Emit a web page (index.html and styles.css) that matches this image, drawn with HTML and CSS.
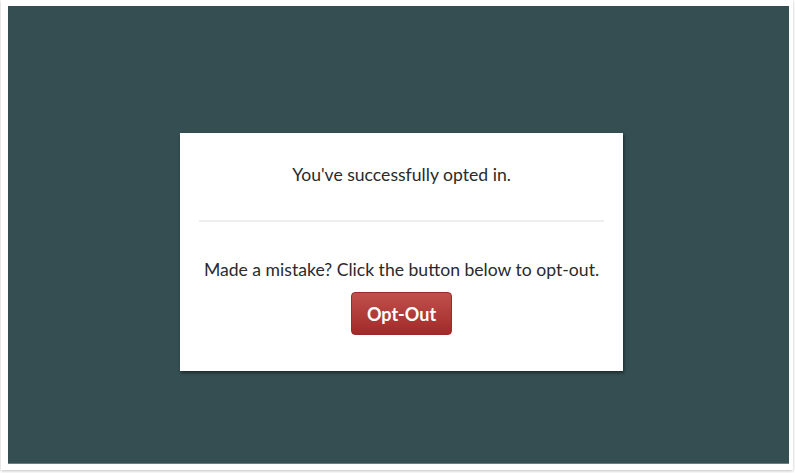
FILE: index.html
```html
<!DOCTYPE html>
<html lang="en">
<head>
    <meta charset="UTF-8">
    <title>Opt-In</title>
    <link rel="stylesheet" href="styles.css">
</head>
<body>
    <div class="frame">
        <div class="stage">
            <div class="card">
                <p class="status">You've successfully opted in.</p>
                <hr class="divider">
                <p class="hint">Made a mistake? Click the button below to opt-out.</p>
                <button class="btn-optout">Opt-Out</button>
            </div>
        </div>
    </div>
</body>
</html>
```

FILE: styles.css
```css
html, body {
    margin: 0;
    padding: 0;
}
body {
    width: 795px;
    height: 473px;
    background-color: #ffffff;
    font-family: Lato, "Open Sans", sans-serif;
    overflow: hidden;
}
.frame {
    width: 792px;
    height: 470px;
    box-sizing: border-box;
    margin-left: 1px;
    padding: 6px 4px 6px 7px;
    background-color: #ffffff;
    box-shadow: 0 1px 3px rgba(0,0,0,0.25);
}
.stage {
    height: 458px;
    box-sizing: border-box;
    background-color: #344e51;
    border-bottom: 1px solid #6b7f80;
    padding: 127px 165px 0 172px;
}
.card {
    width: 443px;
    height: 238px;
    box-sizing: border-box;
    background-color: #ffffff;
    padding: 30px 19px 0 19px;
    text-align: center;
    box-shadow: 1px 2px 3px rgba(0,0,0,0.45);
    color: #2a2a2a;
}
.status {
    margin: 0;
    font-size: 17.6px;
    line-height: 24px;
}
.divider {
    border: none;
    border-top: 2px solid #eeeeee;
    margin: 33px 0 0 0;
}
.hint {
    margin: 36px 0 0 0;
    font-size: 17.6px;
    line-height: 24px;
}
.btn-optout {
    margin-top: 10px;
    width: 101px;
    height: 43px;
    border: 1px solid #9b2a28;
    border-radius: 4px;
    background: linear-gradient(#c0504d, #a22a28);
    color: #ffffff;
    font-family: Lato, "Open Sans", sans-serif;
    font-size: 18px;
    font-weight: bold;
    cursor: pointer;
}
```
